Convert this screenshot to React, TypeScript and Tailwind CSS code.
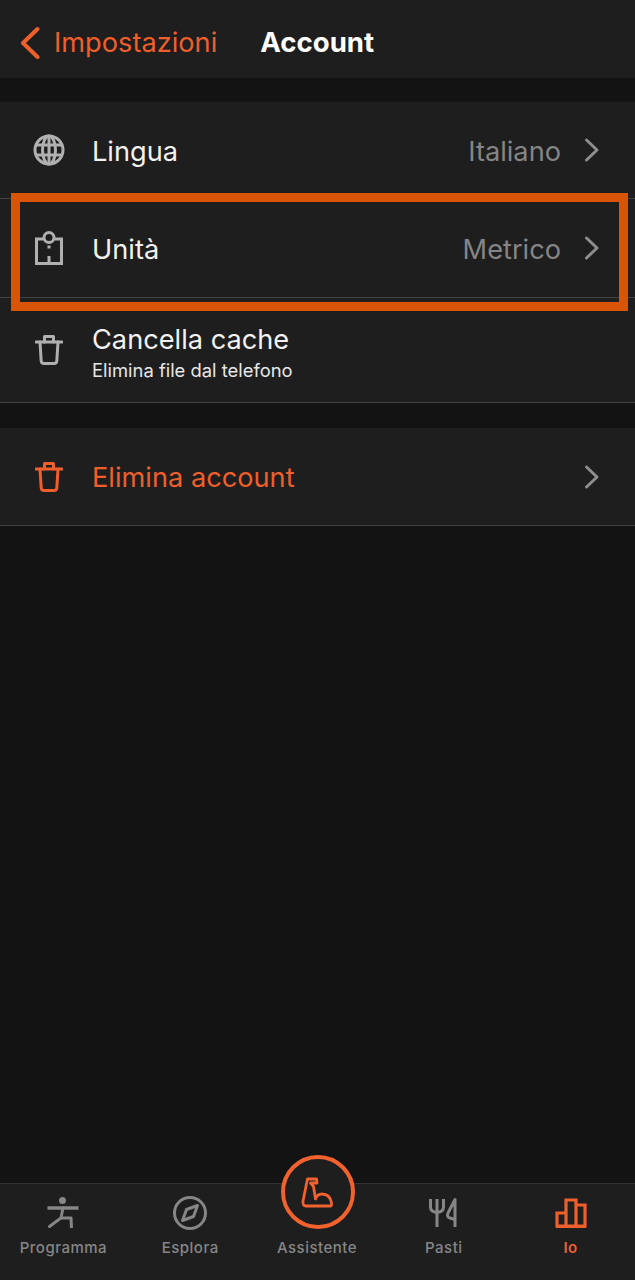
import React from "react";

const Chevron = ({ color = "#8e8e8e" }: { color?: string }) => (
  <svg width="16" height="26" viewBox="0 0 16 26" fill="none" stroke={color} strokeWidth="3" strokeLinecap="round" strokeLinejoin="round">
    <path d="M2.5 3 L13 13 L2.5 23" />
  </svg>
);

const Globe = () => (
  <svg width="32" height="32" viewBox="0 0 32 32" fill="none" stroke="#b0b0b0" strokeWidth="3">
    <circle cx="16" cy="16" r="14" />
    <ellipse cx="16" cy="16" rx="6.5" ry="14" />
    <path d="M3.5 11 H28.5 M3.5 21 H28.5 M16 2 V30" />
  </svg>
);

const Unit = () => (
  <svg width="28" height="34" viewBox="0 0 28 34" fill="none" stroke="#b0b0b0" strokeWidth="3">
    <path d="M8.5 8 H1.5 V32.5 H26.5 V8 H19.5" />
    <circle cx="14" cy="6.5" r="5" />
    <path d="M14 14.5 V17.5 M14 25 V32" />
  </svg>
);

const Trash = ({ color }: { color: string }) => (
  <svg width="28" height="30" viewBox="0 0 28 30" fill="none" stroke={color} strokeWidth="3" strokeLinecap="round" strokeLinejoin="round">
    <path d="M1 7 H27" />
    <path d="M9.5 7 V1.5 H18.5 V7" />
    <path d="M5 7 L6.2 26 Q6.4 28.5 9 28.5 H19 Q21.6 28.5 21.8 26 L23 7" />
  </svg>
);

const Row = ({ icon, title, sub, value, chevron = true, red = false, h, textPad }: { icon: React.ReactNode; title: string; sub?: string; value?: string; chevron?: boolean; red?: boolean; h: string; textPad: string }) => (
  <div className={`flex items-center ${h} bg-[#1e1e1e] border-b border-[#424242] pl-[33px] pr-[35px]`}>
    <div className="w-[32px] flex justify-center shrink-0">{icon}</div>
    <div className={`ml-[27px] flex-1 min-w-0 ${textPad}`}>
      <div className={`text-[27.2px] leading-[32px] ${red ? "text-[#ee5f2c]" : "text-[#f2f2f2]"}`}>{title}</div>
      {sub && <div className="text-[18.4px] leading-[24px] mt-[2px] text-[#e6e6e6]">{sub}</div>}
    </div>
    {value && <span className={`text-[27.2px] leading-[32px] ${textPad} text-[#858585] mr-[23px]`}>{value}</span>}
    {chevron && <Chevron />}
  </div>
);

const NavItem = ({ icon, label, active = false }: { icon: React.ReactNode; label: string; active?: boolean }) => (
  <div className="flex-1 flex flex-col items-center pt-[11px]">
    <div className="h-[36px] flex items-center justify-center">{icon}</div>
    <div className={`mt-[7px] text-[15px] leading-[20px] tracking-[0.5px] ${active ? "font-semibold text-[#ee5f2c]" : "font-medium text-[#868686]"}`}>{label}</div>
  </div>
);

export default function App() {
  return (
    <div className="relative flex flex-col h-[1280px] w-[635px] overflow-hidden bg-[#131313] font-['Inter',sans-serif]">
      <header className="flex items-center h-[78px] shrink-0 bg-[#1e1e1e] pl-[20px] pt-[8px]">
        <svg width="20" height="34" viewBox="0 0 20 34" fill="none" stroke="#ee5f2c" strokeWidth="4" strokeLinecap="round" strokeLinejoin="round">
          <path d="M17.5 3 L3 17 L17.5 31" />
        </svg>
        <span className="ml-[14px] text-[27.2px] text-[#ee5f2c]">Impostazioni</span>
        <span className="ml-[43px] text-[27.6px] font-bold text-white">Account</span>
      </header>

      <section className="mt-[24px] flex flex-col">
        <Row h="h-[97px]" textPad="pt-[4px]" icon={<Globe />} title="Lingua" value="Italiano" />
        <Row h="h-[99px]" textPad="pt-[4px]" icon={<Unit />} title="Unità" value="Metrico" />
        <Row h="h-[105px]" textPad="pt-[6px]" icon={<Trash color="#b0b0b0" />} title="Cancella cache" sub="Elimina file dal telefono" chevron={false} />
      </section>

      <section className="mt-[25px]">
        <Row h="h-[98px]" textPad="pt-[2px]" icon={<Trash color="#ee5f2c" />} title="Elimina account" red />
      </section>

      <div className="flex-1" />

      <nav className="flex h-[97px] shrink-0 bg-[#1e1e1e] border-t border-[#333333] pr-[1px]">
        <NavItem
          label="Programma"
          icon={
            <svg width="32" height="32" viewBox="0 0 32 32" fill="none" stroke="#868686" strokeWidth="3.5">
              <circle cx="15.5" cy="3.5" r="3.5" fill="#868686" stroke="none" />
              <path d="M0.5 11 H31.5" />
              <path d="M16 11 L14 21 L2.5 29.5" strokeLinecap="round" strokeWidth="3" />
              <path d="M14 21 H24 L24.5 31" strokeLinejoin="round" strokeWidth="3" />
            </svg>
          }
        />
        <NavItem
          label="Esplora"
          icon={
            <svg width="36" height="36" viewBox="0 0 36 36" fill="none" stroke="#868686" strokeWidth="3">
              <circle cx="18" cy="18" r="15.5" />
              <path d="M25.5 10.5 L21.5 21.5 L10.5 25.5 L14.5 14.5 Z" strokeLinejoin="round" />
            </svg>
          }
        />
        <NavItem label="Assistente" icon={<div className="h-[36px] w-[36px]" />} />
        <NavItem
          label="Pasti"
          icon={
            <svg width="30" height="30" viewBox="0 0 30 30" fill="none" stroke="#868686" strokeWidth="3">
              <path d="M1.5 1 V9 Q1.5 14 8 14.5 Q14.5 14 14.5 9 V1 M8 1 V29" />
              <path d="M26 29 V1.5 L19 15 Q17.5 19 21 20 L26 21.5" strokeLinejoin="round" />
            </svg>
          }
        />
        <NavItem
          active
          label="Io"
          icon={
            <svg width="32" height="30" viewBox="0 0 32 30" fill="none" stroke="#ee5f2c" strokeWidth="3.2">
              <path d="M2 28 V15 H11 V28 Z M11 28 V2 H21 V28 Z M21 28 V7 H30 V28 Z M1 28.5 H31" />
            </svg>
          }
        />
      </nav>

      <div className="absolute left-[281px] top-[1155px] h-[74px] w-[74px] rounded-full border-[4px] border-[#f1622e] bg-[#1e1e1e] flex items-center justify-center">
        <svg width="34" height="32" viewBox="0 0 34 32" fill="none" stroke="#f1622e" strokeWidth="2.8" strokeLinecap="round" strokeLinejoin="round">
          <path d="M12.5 10.5 L9.5 7 H16 L15.5 3 H6.5 L2 25 Q1.5 30 5 30 H29 Q31 30 30.5 27 Q29 18 21 18 Q16 18 14.5 23 L12.5 10.5" />
        </svg>
      </div>

      <div className="absolute left-[11px] top-[193px] h-[118px] w-[617px] border-[9px] border-[#d95504]" />
    </div>
  );
}
